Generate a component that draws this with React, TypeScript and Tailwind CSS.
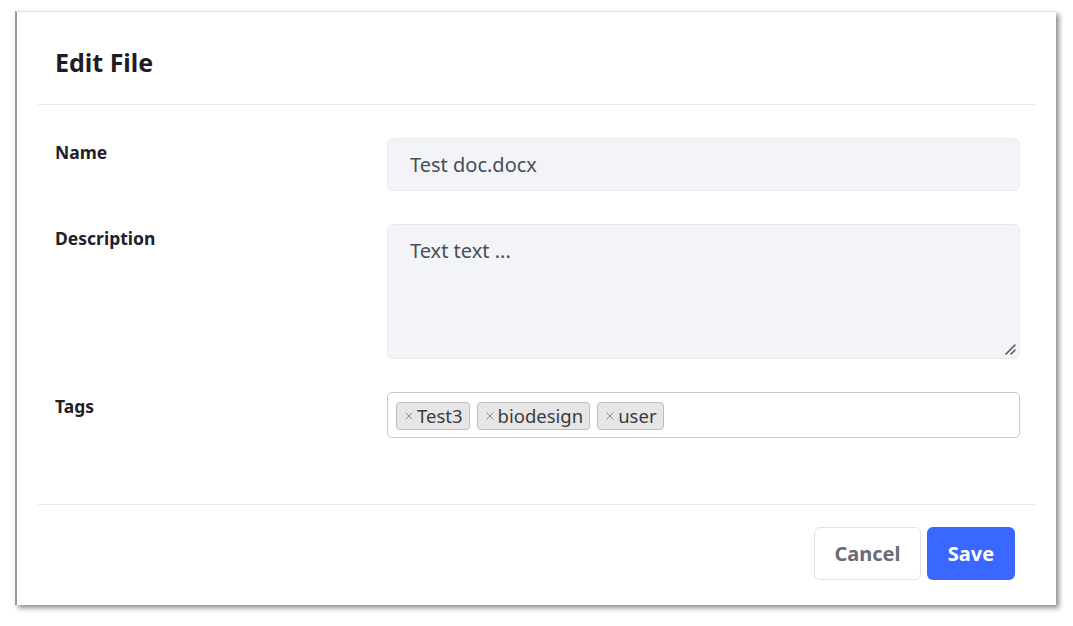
import { X } from 'lucide-react'

const tags = ['Test3', 'biodesign', 'user']

function Label({ children }: { children: string }) {
  return <div className="pt-[3px] text-[17.5px] font-bold leading-[22px] text-[#1f2029]">{children}</div>
}

export default function App() {
  return (
    <div className="h-[626px] w-[1073px] bg-white pl-[15px] pt-[11px]" style={{ fontFamily: '"Noto Sans", "Open Sans", sans-serif' }}>
      <div className="flex h-[594px] w-[1041px] flex-col border-l-2 border-t border-l-[#9a9a9a] border-t-[#e2e2e2] bg-white shadow-[3px_3px_5px_rgba(0,0,0,0.45)]">
        <div className="mx-[21px] flex h-[93px] items-center border-b border-[#e8e9ee] pl-[17px] pt-[10px]">
          <h1 className="text-[25px] font-bold text-[#1c1d24]">Edit File</h1>
        </div>

        <div className="flex flex-col gap-[33px] pl-[38px] pr-[36px] pt-[33px]">
          <div className="grid grid-cols-[332px_1fr]">
            <Label>Name</Label>
            <div className="flex h-[53px] items-center rounded-md border border-[#e9eaef] bg-[#f3f4f8] pl-[22px] text-[20px] text-[#4a4d57]">
              Test doc.docx
            </div>
          </div>

          <div className="grid grid-cols-[332px_1fr]">
            <Label>Description</Label>
            <div className="relative h-[135px] rounded-md border border-[#e9eaef] bg-[#f3f4f8] pl-[22px] pt-[11px] text-[20px] leading-[30px] text-[#4a4d57]">
              Text text ...
              <svg className="absolute bottom-[3px] right-[3px]" width="12" height="12" viewBox="0 0 12 12">
                <path d="M2 11 L11 2 M7 11 L11 7" stroke="#555" strokeWidth="1.6" strokeLinecap="round" />
              </svg>
            </div>
          </div>

          <div className="grid grid-cols-[332px_1fr]">
            <Label>Tags</Label>
            <div className="flex h-[46px] items-start gap-[7px] rounded-[5px] border border-[#c9c9cc] bg-white pl-[8px] pt-[9px]">
              {tags.map(t => (
                <span key={t} className="flex h-[28px] items-center gap-[2px] rounded-[4px] border border-[#bdbdbd] bg-[#e6e6e6] pl-[6px] pr-[6px] text-[18.5px] text-[#3a3b40]">
                  <X size={12} strokeWidth={2} className="text-[#8a8a8a]" />
                  {t}
                </span>
              ))}
            </div>
          </div>
        </div>

        <div className="mx-[21px] mt-auto flex h-[101px] items-start justify-end gap-[6px] border-t border-[#e8e9ee] pr-[20px] pt-[22px]">
          <button className="h-[53px] w-[107px] rounded-md border border-[#e2e3e8] bg-white text-[20px] font-bold text-[#6a6c78]">
            Cancel
          </button>
          <button className="h-[53px] w-[88px] rounded-md bg-[#3a67ff] text-[20px] font-bold text-white">
            Save
          </button>
        </div>
      </div>
    </div>
  )
}
